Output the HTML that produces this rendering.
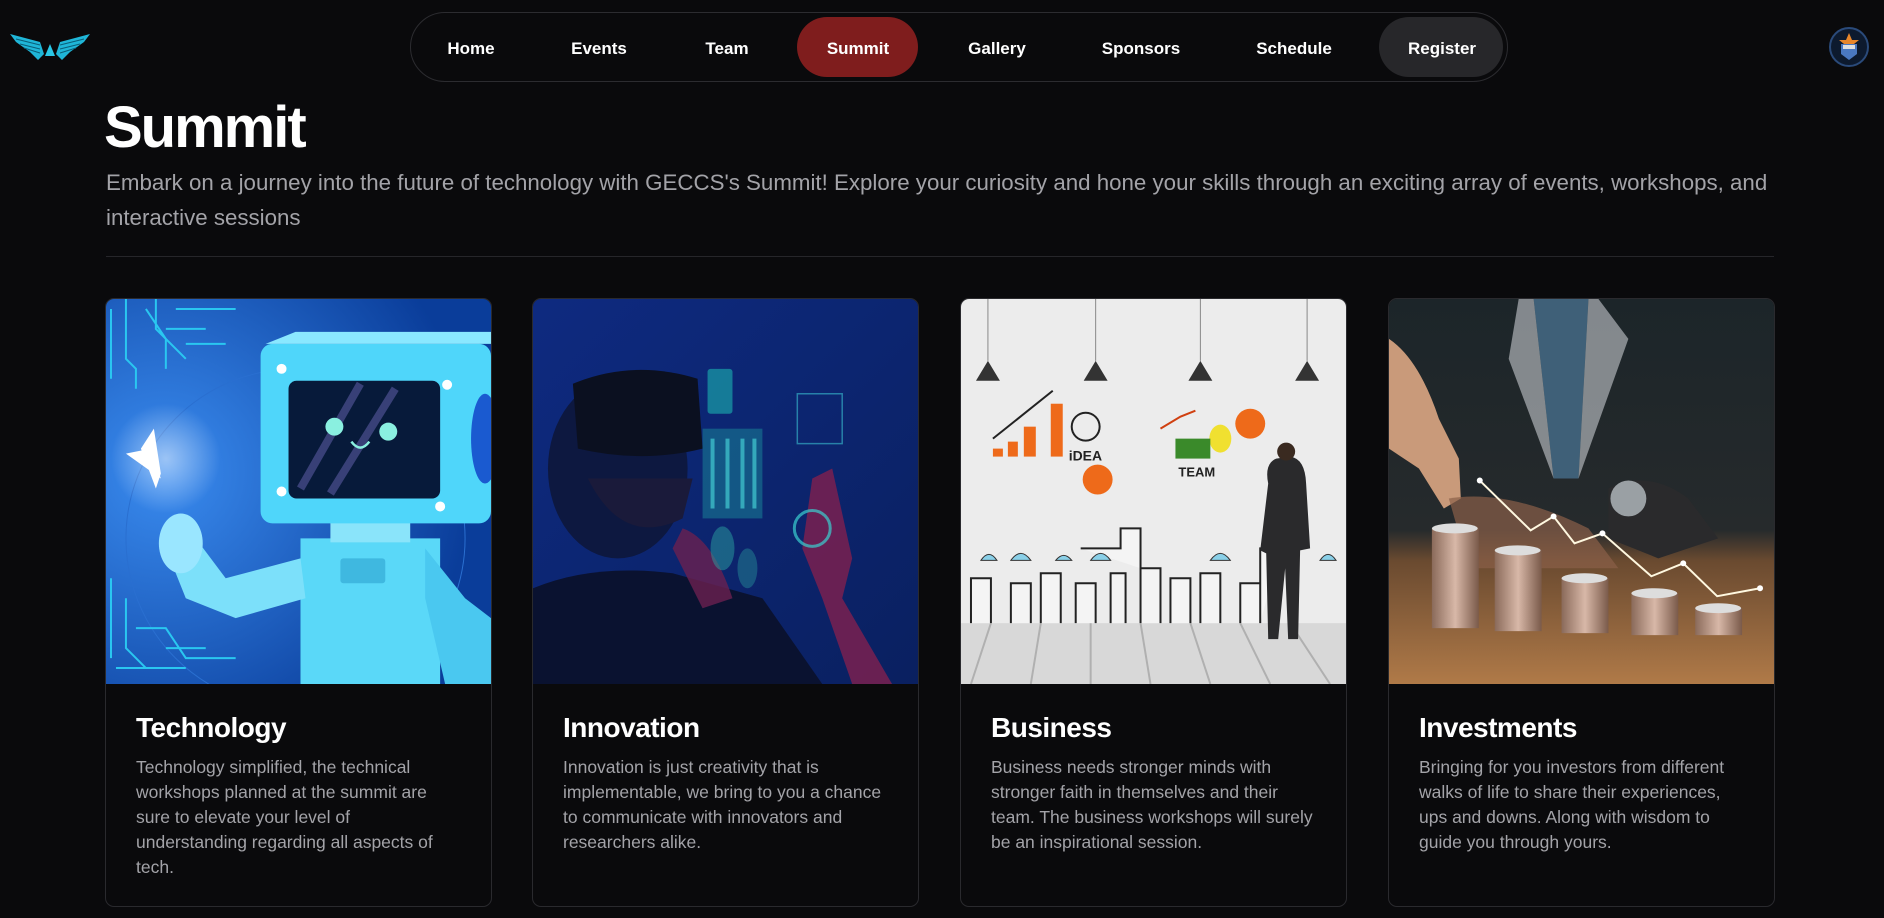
<!DOCTYPE html>
<html><head><meta charset="utf-8">
<style>
*{margin:0;padding:0;box-sizing:border-box}
body{width:1884px;height:918px;background:#0a0a0c;font-family:"Segoe UI","Liberation Sans",sans-serif;color:#fff;position:relative;overflow:hidden}
.nav{position:absolute;left:410px;top:12px;width:1098px;height:70px;border:1px solid #2c2c30;border-radius:35px}
.nav a{position:absolute;top:6px;height:60px;line-height:60px;font-size:17px;font-weight:bold;color:#fff;text-decoration:none;transform:translateX(-50%);white-space:nowrap}
.pill{position:absolute;top:4px;height:60px;border-radius:30px}
h1{position:absolute;left:104px;top:95px;font-size:58px;font-weight:bold;letter-spacing:-2px;line-height:66px}
.lead{position:absolute;left:106px;top:165px;width:1720px;font-size:22.3px;line-height:35px;color:#a3a3a8;white-space:nowrap}
.hr{position:absolute;left:106px;top:256px;width:1668px;height:1px;background:#26262a}
.card{position:absolute;top:298px;width:387px;height:609px;border:1px solid #2a2a2e;border-radius:9px;overflow:hidden;background:#0a0a0c}
.card svg{display:block;width:385px;height:385px}
.card h2{position:absolute;left:30px;top:413px;font-size:28px;font-weight:bold;letter-spacing:-0.5px}
.card p{position:absolute;left:30px;top:456px;width:360px;font-size:17.5px;line-height:25px;color:#a3a3a8;white-space:nowrap}
</style></head><body>
<svg style="position:absolute;left:10px;top:32px" width="80" height="30" viewBox="0 0 80 30">
<path d="M0 2 L30 10 L34 22 L28 28 L20 20 L6 10Z" fill="#1fb6d8"/>
<path d="M80 2 L50 10 L46 22 L52 28 L60 20 L74 10Z" fill="#1fb6d8"/>
<path d="M40 12 L45 24 L35 24Z" fill="#2ac7e6"/>
<path d="M6 7 L30 13 M10 12 L30 17 M14 16 L30 21 M74 7 L50 13 M70 12 L50 17 M66 16 L50 21" stroke="#0a5e78" stroke-width="1"/>
</svg>
<div class="nav">
<div class="pill" style="left:386px;width:121px;background:#7f1d1d"></div>
<div class="pill" style="left:968px;width:124px;background:#27272a"></div>
<a style="left:60px">Home</a>
<a style="left:188px">Events</a>
<a style="left:316px">Team</a>
<a style="left:447px">Summit</a>
<a style="left:586px">Gallery</a>
<a style="left:730px">Sponsors</a>
<a style="left:883px">Schedule</a>
<a style="left:1031px">Register</a>
</div>
<svg style="position:absolute;left:1829px;top:27px" width="40" height="40" viewBox="0 0 40 40">
<circle cx="20" cy="20" r="19" fill="#0d1a2e" stroke="#2a4a7a" stroke-width="2"/>
<path d="M20 6 L23 13 L30 13 L25 17 L27 25 L20 21 L13 25 L15 17 L10 13 L17 13Z" fill="#e8862a"/>
<path d="M12 17 H28 V27 L20 33 L12 27Z" fill="#4a78c0"/>
<rect x="14" y="18" width="12" height="4" fill="#e0e0e0"/>
</svg>
<h1>Summit</h1>
<div class="lead">Embark on a journey into the future of technology with GECCS's Summit! Explore your curiosity and hone your skills through an exciting array of events, workshops, and<br>interactive sessions</div>
<div class="hr"></div>

<div class="card" style="left:105px">
<svg viewBox="0 0 386 386">
<defs><radialGradient id="g1" cx="0.15" cy="0.45" r="0.8"><stop offset="0" stop-color="#3a8cf0"/><stop offset="1" stop-color="#0a3d9a"/></radialGradient>
<radialGradient id="gl" cx="0.5" cy="0.5" r="0.5"><stop offset="0" stop-color="#fff"/><stop offset="1" stop-color="#fff" stop-opacity="0"/></radialGradient></defs>
<rect width="386" height="386" fill="url(#g1)"/>
<circle cx="190" cy="240" r="170" fill="none" stroke="#2a6fd0" stroke-width="1"/>
<path d="M5 10 V80 M20 0 V60 L30 70 V90 M40 10 L60 40 V70 M50 0 V30 L80 60 M70 10 H130 M60 30 H100 M80 45 H120 M5 280 V360 M20 300 V350 L40 370 M30 330 H60 L80 360 H130 M60 350 H100 M10 370 H80" stroke="#2ac7f0" stroke-width="2" fill="none"/>
<circle cx="60" cy="160" r="55" fill="url(#gl)" opacity="0.5"/>
<path d="M50 190 L35 150 L48 130 L55 175Z M55 180 L20 155 L45 150Z" fill="#fff"/>
<path d="M195 240 H335 V386 H195Z" fill="#5ad8f8"/>
<path d="M195 260 L120 280 L90 240 L60 250 L80 300 L130 320 L200 300Z" fill="#7ce0fa"/>
<ellipse cx="75" cy="245" rx="22" ry="30" fill="#9ae6ff"/>
<path d="M320 250 L360 300 L386 320 V386 H340 L320 300Z" fill="#4ac8f0"/>
<rect x="225" y="222" width="80" height="22" fill="#8ae4fa"/>
<rect x="155" y="45" width="231" height="180" rx="12" fill="#4fd6fa"/>
<path d="M160 45 L190 33 L386 33 L386 45Z" fill="#8ae8ff"/>
<rect x="183" y="82" width="152" height="118" rx="8" fill="#071a3a"/>
<path d="M195 190 L255 85 M225 195 L290 90" stroke="#5a5aa0" stroke-width="8" opacity="0.6"/>
<circle cx="229" cy="128" r="9" fill="#8af0e0"/><circle cx="283" cy="133" r="9" fill="#8af0e0"/>
<path d="M246 143 Q255 155 264 143" stroke="#8af0e0" stroke-width="2.5" fill="none"/>
<circle cx="176" cy="70" r="5" fill="#fff"/><circle cx="342" cy="86" r="5" fill="#fff"/><circle cx="176" cy="193" r="5" fill="#fff"/><circle cx="335" cy="208" r="5" fill="#fff"/>
<ellipse cx="380" cy="140" rx="14" ry="45" fill="#1a5ad0"/>
<rect x="235" y="260" width="45" height="25" rx="3" fill="#3fb8e0"/>
</svg>
<h2>Technology</h2>
<p>Technology simplified, the technical<br>workshops planned at the summit are<br>sure to elevate your level of<br>understanding regarding all aspects of<br>tech.</p>
</div>

<div class="card" style="left:532px">
<svg viewBox="0 0 386 386">
<defs><linearGradient id="g2" x1="0" y1="0" x2="1" y2="1"><stop offset="0" stop-color="#0e2a80"/><stop offset="1" stop-color="#0a2060"/></linearGradient></defs>
<rect width="386" height="386" fill="url(#g2)"/>
<path d="M0 290 Q60 265 140 275 L230 300 L290 386 H0Z" fill="#0a1230"/>
<ellipse cx="85" cy="170" rx="70" ry="90" fill="#0d1840"/>
<path d="M40 85 Q100 60 165 80 L170 150 Q110 165 45 150Z" fill="#0b1020"/>
<path d="M55 180 Q90 250 150 220 L160 180Z" fill="#1a1a3a"/>
<path d="M150 230 Q180 240 200 300 L170 310 Q150 270 140 250Z" fill="#6a2050" opacity="0.8"/>
<path d="M280 180 L300 170 L320 260 L310 300 L360 386 H320 L290 300 L270 250Z" fill="#7a2050" opacity="0.85"/>
<rect x="170" y="130" width="60" height="90" fill="#1a8a9a" opacity="0.5"/>
<path d="M180 140 V210 M195 140 V210 M210 140 V210 M222 140 V210" stroke="#4ae0e0" stroke-width="4" opacity="0.6"/>
<rect x="175" y="70" width="25" height="45" rx="3" fill="#1aa0a8" opacity="0.7"/>
<rect x="265" y="95" width="45" height="50" fill="none" stroke="#3ac0d0" stroke-width="1.5" opacity="0.6"/>
<circle cx="280" cy="230" r="18" fill="none" stroke="#3ad0d0" stroke-width="3" opacity="0.7"/>
<ellipse cx="190" cy="250" rx="12" ry="22" fill="#2aa0a0" opacity="0.5"/>
<ellipse cx="215" cy="270" rx="10" ry="20" fill="#2aa0a0" opacity="0.4"/>
</svg>
<h2>Innovation</h2>
<p>Innovation is just creativity that is<br>implementable, we bring to you a chance<br>to communicate with innovators and<br>researchers alike.</p>
</div>

<div class="card" style="left:960px">
<svg viewBox="0 0 386 386">
<rect width="386" height="386" fill="#ececec"/>
<rect y="325" width="386" height="61" fill="#d8d8d8"/>
<path d="M30 325 L10 386 M80 325 L70 386 M130 325 L130 386 M180 325 L190 386 M230 325 L250 386 M280 325 L310 386 M330 325 L370 386" stroke="#b0b0b0" stroke-width="2"/>
<g fill="#333"><path d="M27 0 V62 M135 0 V62 M240 0 V62 M347 0 V62" stroke="#888"/>
<path d="M15 82 L27 62 L39 82Z"/><path d="M123 82 L135 62 L147 82Z"/><path d="M228 82 L240 62 L252 82Z"/><path d="M335 82 L347 62 L359 82Z"/></g>
<path d="M32 140 L92 92" stroke="#222" stroke-width="2"/>
<rect x="32" y="150" width="10" height="8" fill="#ee6a1a"/><rect x="47" y="143" width="10" height="15" fill="#ee6a1a"/><rect x="63" y="128" width="12" height="30" fill="#ee6a1a"/><rect x="90" y="105" width="12" height="53" fill="#ee6a1a"/>
<circle cx="125" cy="128" r="14" fill="none" stroke="#222" stroke-width="2"/>
<circle cx="137" cy="181" r="15" fill="#ee6a1a"/>
<circle cx="290" cy="125" r="15" fill="#ee6a1a"/>
<ellipse cx="260" cy="140" rx="11" ry="14" fill="#f0e030"/>
<rect x="215" y="140" width="35" height="20" fill="#3a8a2a"/>
<path d="M200 130 L220 118 L235 112" stroke="#d04010" stroke-width="2" fill="none"/>
<text x="108" y="162" font-size="14" font-family="Liberation Sans" fill="#222" font-weight="bold">iDEA</text>
<text x="218" y="178" font-size="13" font-family="Liberation Sans" fill="#222" font-weight="bold">TEAM</text>
<path d="M120 250 H160 V230 H180 V270 M10 325 V280 H30 V325 M50 325 V285 H70 V325 M80 325 V275 H100 V325 M115 325 V285 H135 V325 M150 325 V275 H165 V325 M180 325 V270 H200 V325 M210 325 V280 H230 V325 M240 325 V275 H260 V325 M280 325 V285 H300 V325 M300 325 V250 H320" stroke="#222" stroke-width="2" fill="#f4f4f4"/>
<path d="M20 262 q8 -12 16 0z M50 262 q10 -14 20 0z M95 262 q8 -10 16 0z M130 262 q10 -14 20 0z M250 262 q10 -14 20 0z M360 262 q8 -12 16 0z" fill="#8ad0e8" stroke="#333"/>
<path d="M308 185 Q304 165 316 160 L330 158 Q345 160 346 185 L350 250 L340 252 L338 341 L328 341 L325 270 L318 341 L308 341 L306 255 L300 252Z" fill="#2a2a2c"/>
<circle cx="326" cy="153" r="9" fill="#3a2a20"/>
</svg>
<h2>Business</h2>
<p>Business needs stronger minds with<br>stronger faith in themselves and their<br>team. The business workshops will surely<br>be an inspirational session.</p>
</div>

<div class="card" style="left:1388px">
<svg viewBox="0 0 386 386">
<defs><linearGradient id="g4" x1="0" y1="0" x2="0" y2="1"><stop offset="0" stop-color="#1c2529"/><stop offset="0.6" stop-color="#262a2c"/><stop offset="0.68" stop-color="#6a4a30"/><stop offset="1" stop-color="#b07a48"/></linearGradient>
<linearGradient id="cn" x1="0" x2="1"><stop offset="0" stop-color="#8a6a5a"/><stop offset="0.5" stop-color="#d8b8a8"/><stop offset="1" stop-color="#7a5a4a"/></linearGradient></defs>
<rect width="386" height="386" fill="url(#g4)"/>
<path d="M145 0 H200 L190 180 L165 180Z" fill="#3f6078"/>
<path d="M130 0 L145 0 L165 180 L120 60Z M210 0 L200 0 L190 180 L240 40Z" fill="#c8ccd0" opacity="0.6"/>
<path d="M220 190 Q260 170 300 200 L330 240 L270 260 L220 240Z" fill="#2a2a2c"/>
<circle cx="240" cy="200" r="18" fill="#9aa0a4"/>
<path d="M0 40 Q30 60 50 120 L70 160 L72 200 L55 210 L30 170 L0 150Z" fill="#c99a7a"/>
<path d="M60 200 Q120 190 200 230 L230 270 L80 270Z" fill="#8a6048" opacity="0.7"/>
<rect x="43" y="230" width="47" height="100" fill="url(#cn)"/><ellipse cx="66" cy="230" rx="23" ry="5" fill="#ddd"/>
<rect x="106" y="252" width="47" height="81" fill="url(#cn)"/><ellipse cx="129" cy="252" rx="23" ry="5" fill="#ddd"/>
<rect x="173" y="280" width="47" height="55" fill="url(#cn)"/><ellipse cx="196" cy="280" rx="23" ry="5" fill="#ddd"/>
<rect x="243" y="295" width="47" height="42" fill="url(#cn)"/><ellipse cx="266" cy="295" rx="23" ry="5" fill="#ddd"/>
<rect x="307" y="310" width="47" height="27" fill="url(#cn)"/><ellipse cx="330" cy="310" rx="23" ry="5" fill="#ddd"/>
<polyline points="91,182 142,232 165,218 186,245 214,235 263,278 295,265 329,298 372,290" fill="none" stroke="#fff8e0" stroke-width="2"/>
<g fill="#fff"><circle cx="91" cy="182" r="3"/><circle cx="165" cy="218" r="3"/><circle cx="214" cy="235" r="3"/><circle cx="295" cy="265" r="3"/><circle cx="372" cy="290" r="3"/></g>
</svg>
<h2>Investments</h2>
<p>Bringing for you investors from different<br>walks of life to share their experiences,<br>ups and downs. Along with wisdom to<br>guide you through yours.</p>
</div>
</body></html>
